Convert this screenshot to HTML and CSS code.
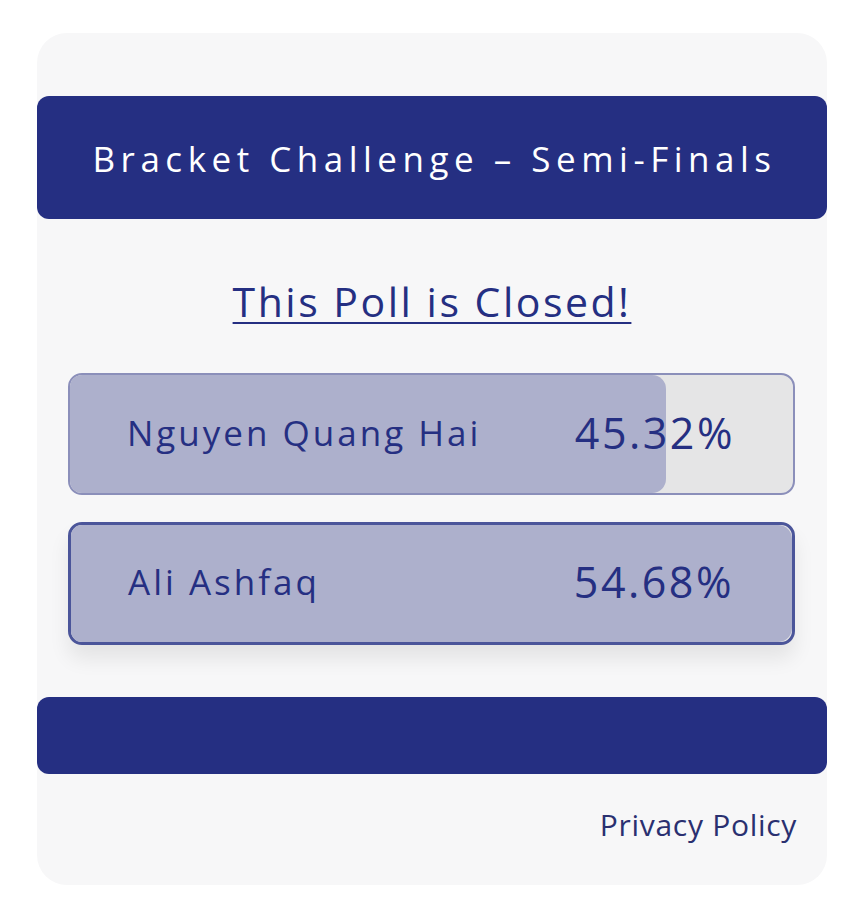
FILE: index.html
```html
<!DOCTYPE html>
<html>
<head>
	<title>Bracket Challenge</title>
	<link rel="stylesheet" href="styles.css">
</head>
<body>
	<div class="card">
		<div class="head">Bracket Challenge – Semi-Finals</div>
		<h2 class="closed">This Poll is Closed!</h2>
		<div class="opts">
			<div class="opt">
				<div class="fill" style="width:82.5%"></div>
				<span class="name">Nguyen Quang Hai</span>
				<span class="pct">45.32%</span>
			</div>
			<div class="opt win">
				<div class="fill" style="width:100%"></div>
				<span class="name">Ali Ashfaq</span>
				<span class="pct">54.68%</span>
			</div>
		</div>
		<div class="foot"></div>
		<div class="links"><a href="#">Privacy Policy</a></div>
	</div>
</body>
</html>
```

FILE: styles.css
```css
*{padding:0; margin:0; box-sizing:border-box;}
body{background:#fff; font-family:"Open Sans","Noto Sans",sans-serif; color:#252f82;}
.card{margin:33px 0 0 37px; width:790px; height:852px; background:#f7f7f8; border-radius:30px; padding-top:63px;}
.head{height:123px; background:#252f82; border-radius:12px; color:#fff; font-size:35px; letter-spacing:5.5px; display:flex; align-items:center; justify-content:center; padding:2px 0 0 5px;}
.closed{font-size:41px; font-weight:normal; text-align:center; text-decoration:underline; text-decoration-thickness:2px; text-underline-offset:5px; letter-spacing:2.5px; margin-top:57px; line-height:50px;}
.opts{padding:0 32px 0 31px; margin-top:47px; display:flex; flex-direction:column; gap:27px;}
.opt{position:relative; height:122px; border:2px solid #8b8fba; border-radius:14px; background:#e5e5e6; display:flex; align-items:center; overflow:hidden;}
.opt.win{height:123px; border:3px solid #4b559a; box-shadow:0 14px 20px rgba(0,0,0,0.08);}
.fill{position:absolute; left:0; top:0; bottom:0; background:#adb0cc; border-radius:0 14px 14px 0;}
.name{position:relative; margin-left:57px; font-size:35px; letter-spacing:3px; flex:1; padding-bottom:4px; font-weight:500;}
.pct{position:relative; margin-right:58px; font-size:43px; letter-spacing:2.5px; padding-bottom:4px;}
.foot{margin-top:52px; height:77px; background:#252f82; border-radius:12px;}
.links{text-align:right; padding:30px 30px 0 0;}
.links a{color:#2a3070; text-decoration:none; font-size:30px; letter-spacing:0.7px;}
```
